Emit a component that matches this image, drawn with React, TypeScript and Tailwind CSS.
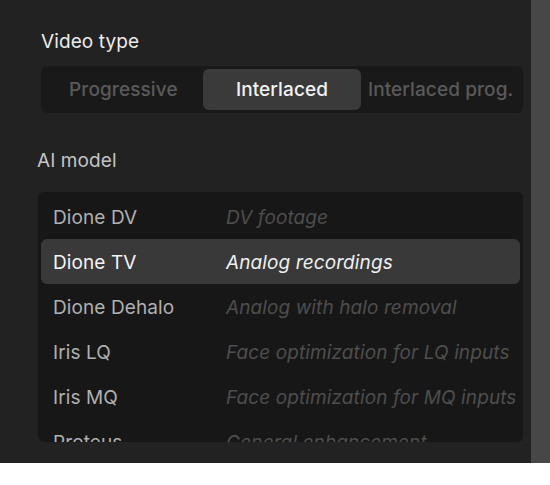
import React from "react";

const models = [
  { name: "Dione DV", desc: "DV footage" },
  { name: "Dione TV", desc: "Analog recordings", active: true },
  { name: "Dione Dehalo", desc: "Analog with halo removal" },
  { name: "Iris LQ", desc: "Face optimization for LQ inputs" },
  { name: "Iris MQ", desc: "Face optimization for MQ inputs" },
  { name: "Proteus", desc: "General enhancement" },
];

const types = [
  { label: "Progressive" },
  { label: "Interlaced", active: true },
  { label: "Interlaced prog." },
];

export default function App() {
  return (
    <div
      className="w-[550px] h-[485px] bg-white flex items-start"
      style={{ fontFamily: "Inter, 'Noto Sans', sans-serif" }}
    >
      <div className="w-[531px] h-[463px] bg-[#222222] flex flex-col">
        <div className="pl-[41px] pt-[30px] text-[19px] leading-[24px] tracking-[0.1px] text-[#ececec]">
          Video type
        </div>
        <div className="ml-[41px] mt-[12px] w-[482px] h-[47px] p-[3px] rounded-md bg-[#191919] grid grid-cols-3">
          {types.map((t) => (
            <div
              key={t.label}
              className={
                t.active
                  ? "h-[41px] pt-[2px] rounded-md bg-[#3a3a3a] flex items-center justify-center text-[19px] font-medium tracking-[0.1px] text-[#f2f2f2] whitespace-nowrap"
                  : "h-[41px] pt-[2px] rounded-md flex items-center justify-center text-[19px] font-medium tracking-[0.1px] text-[#5a5a5a] whitespace-nowrap"
              }
            >
              {t.label}
            </div>
          ))}
        </div>
        <div className="pl-[37px] mt-[36px] text-[19px] leading-[24px] tracking-[0.1px] text-[#c4c4c4]">
          AI model
        </div>
        <div className="ml-[38px] mt-[19px] w-[485px] h-[250px] rounded-md bg-[#171717] overflow-hidden px-[3px] pt-[2px]">
          {models.map((m) => (
            <div
              key={m.name}
              className={
                m.active
                  ? "h-[45px] pt-[2px] rounded-md bg-[#393939] flex items-center pl-[12px] text-[19px] leading-[24px] tracking-[0.1px] whitespace-nowrap"
                  : "h-[45px] pt-[2px] rounded-md flex items-center pl-[12px] text-[19px] leading-[24px] tracking-[0.1px] whitespace-nowrap"
              }
            >
              <span
                className={
                  m.active ? "w-[173px] shrink-0 text-[#f4f4f4]" : "w-[173px] shrink-0 text-[#b0b0b0]"
                }
              >
                {m.name}
              </span>
              <span className={m.active ? "italic text-[#f0f0f0]" : "italic text-[#4e4e4e]"}>
                {m.desc}
              </span>
            </div>
          ))}
        </div>
      </div>
      <div className="w-[19px] h-[463px] bg-[#474747]" />
    </div>
  );
}
